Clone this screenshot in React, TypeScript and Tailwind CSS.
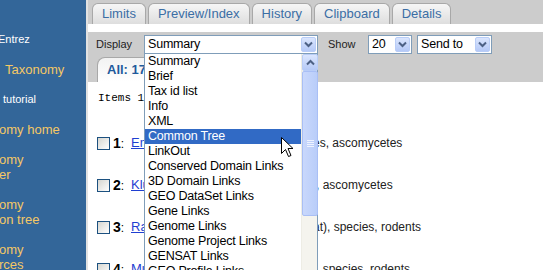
import React from "react";

const SIDE = [
  { lines: ["Entrez"], cls: "text-[11px] text-white ml-[-2px]" },
  { lines: ["Taxonomy"], cls: "text-[13px] text-[#f5c865] ml-[5px]" },
  { lines: ["tutorial"], cls: "text-[11px] text-white ml-[3px]" },
  { lines: ["omy home"], cls: "text-[13px] text-[#f5c865] ml-[-1px]" },
  { lines: ["omy", "er"], cls: "text-[13px] text-[#f5c865] ml-[-1px]" },
  { lines: ["omy", "on tree"], cls: "text-[13px] text-[#f5c865] ml-[-1px]" },
  { lines: ["omy", "rces"], cls: "text-[13px] text-[#f5c865] ml-[-1px]" },
];

const TABS = ["Limits", "Preview/Index", "History", "Clipboard", "Details"];

const OPTIONS = [
  "Summary",
  "Brief",
  "Tax id list",
  "Info",
  "XML",
  "Common Tree",
  "LinkOut",
  "Conserved Domain Links",
  "3D Domain Links",
  "GEO DataSet Links",
  "Gene Links",
  "Genome Links",
  "Genome Project Links",
  "GENSAT Links",
  "GEO Profile Links",
];

const ROWS = [
  { n: 1, link: "Emericella nidulans", rest: ", speci", tail: "es, ascomycetes", clip: "w-[182px]" },
  { n: 2, link: "Kluyveromyces lactis", rest: "", tail: ", ascomycetes", clip: "w-[185px]" },
  { n: 3, link: "Rattus norvegicus", rest: " (Norway r", tail: "at), species, rodents", clip: "w-[182px]" },
  { n: 4, link: "Mus musculus", rest: " (house mouse)", tail: ", species, rodents", clip: "w-[185px]" },
];

function Chevron({ up = false }: { up?: boolean }) {
  return (
    <svg width="9" height="7" viewBox="0 0 9 7" className={up ? "rotate-180" : ""}>
      <path d="M1 1.5 L4.5 5 L8 1.5" fill="none" stroke="#4d6185" strokeWidth="2" />
    </svg>
  );
}

function ArrowButton() {
  return (
    <div className="w-[15px] h-[15px] shrink-0 rounded-[2px] border border-[#b9cdf7] bg-linear-to-b from-[#dbe6fe] to-[#b5c9f7] flex items-center justify-center">
      <Chevron />
    </div>
  );
}

function Select({ value, cls }: { value: string; cls: string }) {
  return (
    <div className={`${cls} h-[19px] shrink-0 border border-[#7f9db9] bg-white flex items-center pl-[3px] pr-[1px]`}>
      <span className="flex-1 text-[12.5px] tracking-[-0.2px] leading-[15px] text-black whitespace-nowrap">{value}</span>
      <ArrowButton />
    </div>
  );
}

function Dropdown() {
  return (
    <div className="absolute left-0 top-[19px] w-[174px] h-[240px] border border-[#7f9db9] border-t-0 bg-white flex">
      <div className="flex-1 flex flex-col">
        {OPTIONS.map((o) => (
          <div
            key={o}
            className={`h-[15px] leading-[15px] pl-[3px] text-[12.5px] tracking-[-0.2px] whitespace-nowrap ${
              o === "Common Tree" ? "bg-[#316ac5] text-white" : "text-black"
            }`}
          >
            {o}
          </div>
        ))}
      </div>
      <div className="w-[16px] flex flex-col bg-[#f5f4ee] border-l border-[#eeede5]">
        <div className="w-[16px] h-[17px] rounded-[2px] border border-[#b9cdf7] bg-linear-to-b from-[#dbe6fe] to-[#b5c9f7] flex items-center justify-center">
          <Chevron up />
        </div>
        <div className="w-[16px] h-[145px] rounded-[2px] border border-[#a9bff5] bg-linear-to-r from-[#c9d8fc] to-[#b9cdf9] flex flex-col items-center justify-center gap-[1px]">
          <div className="w-[7px] h-[1px] bg-[#eef3ff]" />
          <div className="w-[7px] h-[1px] bg-[#eef3ff]" />
          <div className="w-[7px] h-[1px] bg-[#eef3ff]" />
          <div className="w-[7px] h-[1px] bg-[#eef3ff]" />
        </div>
        <div className="flex-1" />
      </div>
    </div>
  );
}

export default function App() {
  return (
    <div className="relative w-[543px] h-[270px] overflow-hidden flex bg-white font-['Liberation_Sans',Arial,sans-serif]">
      <aside className="w-[86px] shrink-0 bg-[#336699] overflow-hidden pt-[32px] flex flex-col gap-[15px]">
        {SIDE.map((s, i) => (
          <div key={i} className={`${s.cls} leading-[15px] whitespace-nowrap`}>
            {s.lines.map((l) => (
              <div key={l}>{l}</div>
            ))}
          </div>
        ))}
      </aside>

      <main className="flex-1 flex flex-col border-l-2 border-[#e2e2e2]">
        <div className="h-[24px] shrink-0 bg-[#cccccc] flex items-end gap-[2px] pl-[4px]">
          {TABS.map((t) => (
            <div
              key={t}
              className="h-[21px] px-[9px] rounded-t-[6px] border border-b-0 border-[#a8a8a8] bg-linear-to-b from-[#f6f6f6] to-[#dedede] text-[13px] leading-[20px] text-[#3b6ea5] whitespace-nowrap"
            >
              {t}
            </div>
          ))}
        </div>
        <div className="h-[8px] shrink-0 bg-white" />

        <div className="h-[50px] shrink-0 bg-[#cccccc] flex flex-col">
          <div className="mt-[3px] h-[19px] pl-[8px] flex items-center text-[11px] text-[#222]">
            <span className="w-[48px]">Display</span>
            <div className="relative z-10">
              <Select value="Summary" cls="w-[174px]" />
              <Dropdown />
            </div>
            <span className="ml-[10px] w-[40px]">Show</span>
            <Select value="20" cls="w-[44px]" />
            <Select value="Send to" cls="w-[75px] ml-[5px]" />
          </div>
          <div className="mt-[3px] ml-[9px] h-[25px] self-start rounded-tl-[8px] rounded-tr-[8px] border border-b-0 border-[#a8a8a8] bg-linear-to-b from-[#f2f2f2] to-white px-[9px] text-[13px] leading-[24px] font-bold text-[#1f5a9c]">
            All: 17 &nbsp;&nbsp;&nbsp;&nbsp;
          </div>
        </div>

        <div className="flex-1 bg-white pl-[10px] pt-[10px]">
          <div className="font-['Liberation_Mono',monospace] text-[11px] leading-[13px] text-black whitespace-nowrap">
            Items 1 - 17 of 17
          </div>
          <div className="mt-[30px] ml-[-1px] flex flex-col gap-[26px]">
            {ROWS.map((r) => (
              <div key={r.n} className="h-[16px] flex items-center text-[12px] text-[#222] whitespace-nowrap">
                <div className="w-[13px] h-[13px] shrink-0 border border-[#1c5180] bg-linear-to-br from-[#d6d6d0] to-white" />
                <span className="ml-[3px] w-[18px] shrink-0 text-black">
                  <b className="text-[14px]">{r.n}</b>:
                </span>
                <span className={`${r.clip} shrink-0 overflow-hidden text-[13px]`}>
                  <a className="text-[#1f3fd1] underline">{r.link}</a>
                  {r.rest}
                </span>
                <span>{r.tail}</span>
              </div>
            ))}
          </div>
        </div>
      </main>

      <svg className="absolute left-[281px] top-[137px] z-20" width="13" height="21" viewBox="0 0 13 21">
        <path d="M0.5 0.5 L0.5 16.5 L4.5 12.5 L7.5 19.5 L10 18.5 L7 11.5 L12 11.5 Z" fill="white" stroke="black" strokeWidth="1" />
      </svg>
    </div>
  );
}
